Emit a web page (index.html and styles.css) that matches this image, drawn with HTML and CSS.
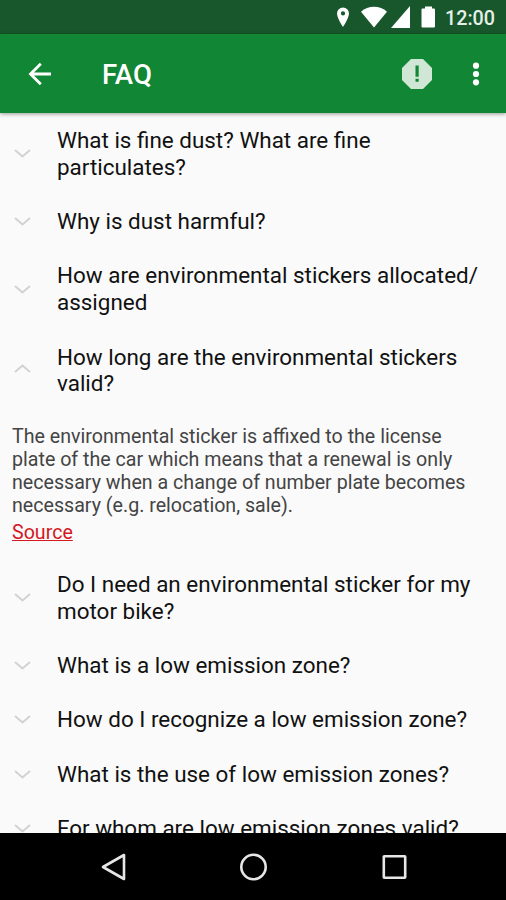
FILE: index.html
```html
<!DOCTYPE html>
<html lang="en">
<head>
    <meta charset="UTF-8">
    <meta name="viewport" content="width=device-width, initial-scale=1.0">
    <title>FAQ</title>
    <link rel="stylesheet" href="styles.css">
</head>
<body>

<div class="status-bar">
    <svg class="status-icons" width="100" height="34" viewBox="0 0 100 34">
        <path fill-rule="evenodd" d="M7 7.500a6 6 0 0 0-6 6C1 18 7 27 7 27s6-9 6-13.500a6 6 0 0 0-6-6zm0 3.800a2.100 2.100 0 1 1 0 4.200 2.100 2.100 0 0 1 0-4.200z"/>
        <path d="M25 11.800C32 5 44 5 51 11.800L38 27.500z"/>
        <path d="M74 6v22H55z"/>
        <path d="M89 6.500h7v2h2q1 0 1 1v17q0 1-1 1h-11.500q-1 0-1-1v-17q0-1 1-1H89z"/>
    </svg>
    <span class="clock">12:00</span>
</div>

<header class="app-bar">
    <svg width="24" height="24" viewBox="0 0 24 24">
        <path class="arrow" d="M12.800 1.800L2.500 12l10.300 10.200M2.800 12H23"/>
    </svg>
    <h1>FAQ</h1>
    <svg class="alert" width="30" height="30" viewBox="0 0 30 30">
        <path fill="#cfe7d4" d="M9 0h12l9 9v12l-9 9H9l-9-9V9z"/>
        <path fill="#118634" d="M13.500 6.500h3.200v11.300h-3.200zM13.500 19.700h3.200v3h-3.200z"/>
    </svg>
    <svg class="more" width="8" height="24" viewBox="0 0 8 24">
        <circle cx="4" cy="3.700" r="3.100"/>
        <circle cx="4" cy="12" r="3.100"/>
        <circle cx="4" cy="20.300" r="3.100"/>
    </svg>
</header>

<main class="faq">
    <div class="question">
        <svg class="chevron" width="17" height="9" viewBox="0 0 17 9"><path d="M1 1l7.500 6.500L16 1"/></svg>
        <p>What is fine dust? What are fine<br>particulates?</p>
    </div>
    <div class="question">
        <svg class="chevron" width="17" height="9" viewBox="0 0 17 9"><path d="M1 1l7.500 6.500L16 1"/></svg>
        <p>Why is dust harmful?</p>
    </div>
    <div class="question">
        <svg class="chevron" width="17" height="9" viewBox="0 0 17 9"><path d="M1 1l7.500 6.500L16 1"/></svg>
        <p>How are environmental stickers allocated/<br>assigned</p>
    </div>
    <div class="question open">
        <svg class="chevron" width="17" height="9" viewBox="0 0 17 9"><path d="M1 1l7.500 6.500L16 1"/></svg>
        <p>How long are the environmental stickers<br>valid?</p>
    </div>
    <div class="answer">
        <p>The environmental sticker is affixed to the license<br>plate of the car which means that a renewal is only<br>necessary when a change of number plate becomes<br>necessary (e.g. relocation, sale).</p>
        <a href="#">Source</a>
    </div>
    <div class="question">
        <svg class="chevron" width="17" height="9" viewBox="0 0 17 9"><path d="M1 1l7.500 6.500L16 1"/></svg>
        <p>Do I need an environmental sticker for my<br>motor bike?</p>
    </div>
    <div class="question">
        <svg class="chevron" width="17" height="9" viewBox="0 0 17 9"><path d="M1 1l7.500 6.500L16 1"/></svg>
        <p>What is a low emission zone?</p>
    </div>
    <div class="question">
        <svg class="chevron" width="17" height="9" viewBox="0 0 17 9"><path d="M1 1l7.500 6.500L16 1"/></svg>
        <p>How do I recognize a low emission zone?</p>
    </div>
    <div class="question">
        <svg class="chevron" width="17" height="9" viewBox="0 0 17 9"><path d="M1 1l7.500 6.500L16 1"/></svg>
        <p>What is the use of low emission zones?</p>
    </div>
    <div class="question">
        <svg class="chevron" width="17" height="9" viewBox="0 0 17 9"><path d="M1 1l7.500 6.500L16 1"/></svg>
        <p>For whom are low emission zones valid?</p>
    </div>
</main>

<nav class="nav-bar">
    <svg width="28" height="28" viewBox="0 0 28 28"><path d="M25 2v24L4 14z"/></svg>
    <svg width="28" height="28" viewBox="0 0 28 28"><circle cx="14.500" cy="14" r="12.200"/></svg>
    <svg width="28" height="28" viewBox="0 0 28 28"><rect x="3.800" y="3.300" width="21.400" height="21.400" rx="0.500"/></svg>
</nav>

</body>
</html>
```
FILE: styles.css
```css
* {
    box-sizing: border-box;
}
body {
    display: flex;
    flex-direction: column;
    width: 506px;
    height: 900px;
    margin: 0;
    overflow: hidden;
    font-family: Roboto, sans-serif;
    background-color: #fafafa;
}
h1, p {
    margin: 0;
}
svg {
    display: block;
    flex-shrink: 0;
}
.status-bar {
    display: flex;
    flex-shrink: 0;
    align-items: center;
    justify-content: flex-end;
    height: 34px;
    padding-right: 11px;
    background-color: #17572b;
    color: #e6f0e8;
}
.status-icons {
    margin-right: 9px;
    fill: white;
}
.clock {
    padding-top: 2px;
    font-size: 19.7px;
    font-weight: 500;
}
.app-bar {
    display: flex;
    flex-shrink: 0;
    align-items: center;
    height: 79px;
    padding: 0 26px 0 28px;
    background-color: #118634;
    color: white;
    box-shadow: 0 1px 4px rgba(0, 0, 0, 0.4);
    z-index: 1;
}
.app-bar h1 {
    margin-left: 50px;
    padding-top: 2px;
    font-size: 27.6px;
    font-weight: 500;
}
.arrow {
    fill: none;
    stroke: white;
    stroke-width: 2.8;
}
.alert {
    margin-left: auto;
}
.more {
    margin-left: 40px;
    fill: white;
}
.faq {
    flex: 1;
    min-height: 0;
    overflow: hidden;
}
.question {
    display: flex;
    align-items: center;
    padding: 13.86px 0 13.86px 14px;
    font-size: 22.44px;
    line-height: 26.7px;
    color: #111;
    white-space: nowrap;
}
.chevron {
    margin-right: 26px;
    fill: none;
    stroke: #d2d2d2;
    stroke-width: 2;
}
.open .chevron {
    margin-bottom: 4px;
    transform: rotate(180deg);
}
.answer {
    height: 146.2px;
    padding: 14.4px 12px 0;
    font-size: 19.64px;
    line-height: 23px;
    color: #444;
    white-space: nowrap;
}
.answer a {
    display: inline-block;
    margin-top: 4px;
    color: #d3181f;
}
.nav-bar {
    display: flex;
    flex-shrink: 0;
    align-items: center;
    justify-content: center;
    gap: 112.5px;
    height: 67px;
    background-color: black;
}
.nav-bar svg {
    fill: none;
    stroke: #e6e6e6;
    stroke-width: 2.6;
    stroke-linejoin: round;
}
```
